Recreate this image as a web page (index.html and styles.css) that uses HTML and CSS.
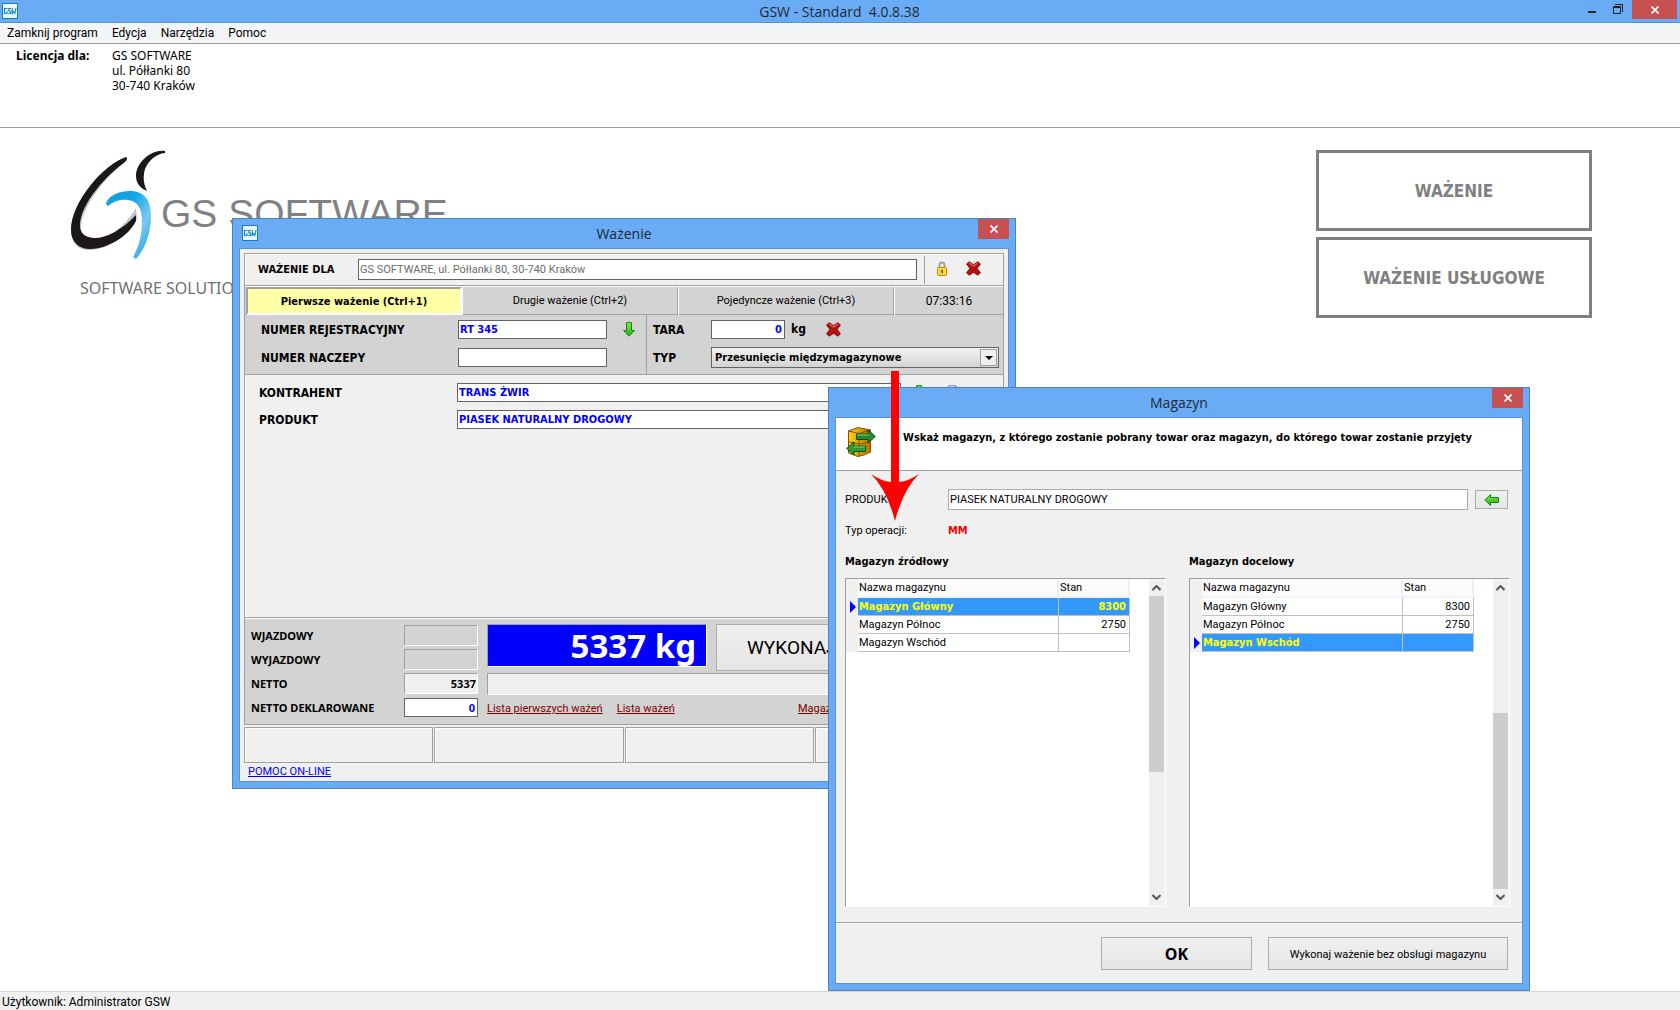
FILE: index.html
```html
<!DOCTYPE html>
<html lang="pl">
<head>
<meta charset="utf-8">
<title>GSW - Standard 4.0.8.38</title>
<link rel="stylesheet" href="styles.css">
</head>
<body>
<svg class="defs" aria-hidden="true">
  <defs>
    <linearGradient id="green" x1="0" y1="0" x2="0" y2="1"><stop offset="0" stop-color="#8be84a"/><stop offset="1" stop-color="#1fae10"/></linearGradient>
    <linearGradient id="blue" x1="0" y1="0" x2="1" y2="1"><stop offset="0" stop-color="#0f9fe0"/><stop offset="0.35" stop-color="#12a4e6"/><stop offset="0.65" stop-color="#7cc8f2"/><stop offset="1" stop-color="#0f9fe0"/></linearGradient>
    <linearGradient id="gold" x1="0" y1="0" x2="1" y2="0"><stop offset="0" stop-color="#ffd80a"/><stop offset="1" stop-color="#b86e00"/></linearGradient>
    <symbol id="i-close" viewBox="0 0 8 8"><path d="M0.5 0.5L7.5 7.5M7.5 0.5L0.5 7.5" stroke="#fff" stroke-width="1.7"/></symbol>
    <symbol id="i-down" viewBox="0 0 12 15"><path d="M3.5 0.6h5v7.9h3L6 14.2 0.6 8.5h2.9z" fill="url(#green)" stroke="#0a8a0a"/></symbol>
    <symbol id="i-left" viewBox="0 0 15 12"><path d="M14.4 3.5v5H6.5v3L0.8 6 6.5 0.6v2.9z" fill="url(#green)" stroke="#0a8a0a"/></symbol>
    <symbol id="i-cross" viewBox="0 0 15 15"><path d="M3.2 0.7L7.5 3.600 11.8 0.7 14.5 3 11.2 7.4 14.5 11.800 11.800 14.2 7.5 11.400 3.200 14.2 0.500 11.800 3.800 7.4 0.500 3z" fill="#b5120f" stroke="#7c0808" stroke-width="0.8"/><path d="M3.2 1.9L7.5 4.900 11.800 1.900" fill="none" stroke="#e06055" stroke-width="1.200"/></symbol>
    <symbol id="i-app" viewBox="0 0 16 16"><rect x="0.5" y="0.5" width="15" height="15" fill="#e9f5fb" stroke="#1580bd"/><path d="M5.5 5.5h-3v5h2.500v-2.500M9 5.500H6.800v2.500H8.700v2.500H6.300M10.300 5v5.500l1.300-2 1.200 2 1.200-5.500" fill="none" stroke="#1487c6" stroke-width="1.100"/></symbol>
  </defs>
</svg>

<header class="titlebar">
  <svg class="app-icon" width="16" height="16"><use href="#i-app"/></svg>
  <h1 class="title">GSW - Standard&nbsp; 4.0.8.38</h1>
  <div class="controls">
    <button class="ctl" aria-label="Minimalizuj"><svg width="8" height="10"><path d="M0 7h8v2H0z" fill="#222"/></svg></button>
    <button class="ctl" aria-label="Przywróć"><svg width="10" height="10"><path d="M2 0.500H9.500V8M0.500 2.500h7v7h-7zM0.500 3.500h7" fill="none" stroke="#222"/></svg></button>
    <button class="close close-main" aria-label="Zamknij"><svg width="8" height="8"><use href="#i-close"/></svg></button>
  </div>
</header>
<nav class="menu">
  <button>Zamknij program</button><button>Edycja</button><button>Narzędzia</button><button>Pomoc</button>
</nav>
<section class="licence">
  <strong>Licencja dla:</strong>
  <p>GS SOFTWARE<br>ul. Półłanki 80<br>30-740 Kraków</p>
</section>

<main class="desktop">
  <div class="brand">
    <svg class="logo" width="400" height="114" viewBox="0 0 400 114">
      <path d="M56 8C36 12 1 52 1 80c0 14 8 21 20 20 16-1 38-15 46-31l-1-11C55 77 35 91 24 91 15 91 11 85 11 77 12 55 38 25 56 11z" fill="#c3c4ca"/>
      <path d="M56 7C34 14 1 52 1 80c0 12 8 19 19 19 17 0 38-12 46-28V65C52 80 36 88 25 88 15 88 10 83 10 76 10 53 38 24 55 12 57 10 58 8 56 7z" fill="#1b171b"/>
      <path d="M95 1C82-1 66 12 66 26c0 7 4 12 11 15-4-8-4-15-2-22C79 10 86 4 95 3z" fill="#1b171b"/>
      <path d="M36 54C38 45 50 41 60 41c14 0 21 9 21 25 0 17-6 33-15 43l-3-2c7-12 9-25 9-36 0-12-4-20-14-21-9-1-15 2-20 6z" fill="url(#blue)"/>
      <text x="91" y="77" class="wordmark">GS SOFTWARE</text>
    </svg>
    <p class="slogan">SOFTWARE SOLUTIONS</p>
  </div>
  <div class="actions">
    <button>WAŻENIE</button>
    <button>WAŻENIE USŁUGOWE</button>
  </div>
</main>

<footer class="status">Użytkownik: Administrator GSW</footer>

<section class="window weighing" aria-label="Ważenie">
  <header class="win-title">
    <svg class="win-icon" width="16" height="16"><use href="#i-app"/></svg>
    <h2 class="title">Ważenie</h2>
    <button class="close" aria-label="Zamknij"><svg width="8" height="8"><use href="#i-close"/></svg></button>
  </header>
  <div class="win-body w-body">
    <div class="panel">
      <div class="owner">
        <label for="owner">WAŻENIE DLA</label>
        <input id="owner" class="field" value="GS SOFTWARE, ul. Półłanki 80, 30-740 Kraków">
        <div class="owner-tools">
          <button class="icon" aria-label="Zablokuj"><svg width="12" height="16" viewBox="0 0 12 16"><path d="M3.500 8V4a2.500 2.500 0 0 1 5 0v4" fill="none" stroke="#a2a29a" stroke-width="2"/><rect x="1.500" y="6.500" width="9" height="8" rx="1" fill="#ffd932" stroke="#bd8a08"/><path d="M6 9v3" stroke="#5c4200" stroke-width="1.500"/></svg></button>
          <button class="icon" aria-label="Wyczyść"><svg width="15" height="15"><use href="#i-cross"/></svg></button>
        </div>
      </div>
      <div class="tabs">
        <button class="tab active">Pierwsze ważenie (Ctrl+1)</button>
        <button class="tab">Drugie ważenie (Ctrl+2)</button>
        <button class="tab">Pojedyncze ważenie (Ctrl+3)</button>
        <span class="tab clock">07:33:16</span>
      </div>
      <div class="vehicle">
        <div class="plates">
          <label for="plate">NUMER REJESTRACYJNY</label>
          <input id="plate" class="field bold" value="RT 345">
          <button class="icon" aria-label="Wybierz pojazd"><svg width="12" height="15"><use href="#i-down"/></svg></button>
          <label for="trailer">NUMER NACZEPY</label>
          <input id="trailer" class="field bold">
        </div>
        <div class="tare">
          <label for="tare">TARA</label>
          <div class="tare-row">
            <input id="tare" class="field bold num" value="0"><span class="unit">kg</span>
            <button class="icon" aria-label="Wyczyść tarę"><svg width="15" height="15"><use href="#i-cross"/></svg></button>
          </div>
          <label for="type">TYP</label>
          <div class="select"><select id="type"><option>Przesunięcie międzymagazynowe</option></select><span class="drop"></span></div>
        </div>
      </div>
      <div class="goods">
        <label for="client">KONTRAHENT</label>
        <input id="client" class="field bold" value="TRANS ŻWIR">
        <div class="goods-tools">
          <button class="icon" aria-label="Wybierz kontrahenta"><svg width="12" height="15"><use href="#i-down"/></svg></button>
          <button class="icon" aria-label="Karta kontrahenta"><svg width="12" height="15"><path d="M0.500 0.500h7l4 4v10h-11zM7.500 0.500v4h4" fill="#d5e1f3" stroke="#8797bd"/></svg></button>
        </div>
        <label for="product">PRODUKT</label>
        <input id="product" class="field bold" value="PIASEK NATURALNY DROGOWY">
      </div>
      <div class="result">
        <div class="weights">
          <label for="win">WJAZDOWY</label><input id="win" class="sunken" readonly>
          <label for="wout">WYJAZDOWY</label><input id="wout" class="sunken" readonly>
          <label for="net">NETTO</label><input id="net" class="sunken light" value="5337" readonly>
          <label for="decl">NETTO DEKLAROWANE</label><input id="decl" class="field bold num" value="0">
        </div>
        <div class="reading">
          <div class="reading-top">
            <output class="display">5337 kg</output>
            <button class="push perform">WYKONAJ</button>
          </div>
          <div class="message"></div>
          <div class="links">
            <div class="lists">
              <a href="#first">Lista pierwszych ważeń</a>
              <a href="#all">Lista ważeń</a>
            </div>
            <a href="#store">Magazyn</a>
          </div>
        </div>
      </div>
    </div>
    <div class="cells"><span></span><span></span><span></span><span></span></div>
    <a class="help" href="#help">POMOC ON-LINE</a>
  </div>
</section>

<section class="window store" aria-label="Magazyn">
  <header class="win-title">
    <h2 class="title">Magazyn</h2>
    <button class="close" aria-label="Zamknij"><svg width="8" height="8"><use href="#i-close"/></svg></button>
  </header>
  <div class="win-body">
    <div class="intro">
      <svg width="30" height="30" viewBox="0 0 30 30">
        <path d="M2.500 4L12 0.600 24.500 3v22L18 28l-6 1.500L2.500 26z" fill="url(#gold)" stroke="#855000"/>
        <path d="M2.500 4L13 6.500 24.500 3M13 6.500V29M3 15l10 2 11-2" fill="none" stroke="#855000"/>
        <path d="M10.500 7H22V2.800L29.300 9.500 22 16v-3.500H10.500z" fill="#238a2b" stroke="#0c4d14"/>
        <path d="M11 8h11.500" stroke="#86d689"/>
        <path d="M19.500 19H8v-4L0.700 21.500 8 28v-3.500h11.500z" fill="#2c9c33" stroke="#0c4d14"/>
        <path d="M8 20h11" stroke="#86d689"/>
      </svg>
      <p>Wskaż magazyn, z którego zostanie pobrany towar oraz magazyn, do którego towar zostanie przyjęty</p>
    </div>
    <div class="form">
      <label for="sproduct">PRODUKT:</label>
      <input id="sproduct" class="field plain" value="PIASEK NATURALNY DROGOWY">
      <button class="push pick" aria-label="Wybierz produkt"><svg width="15" height="12"><use href="#i-left"/></svg></button>
      <span>Typ operacji:</span><strong class="op">MM</strong>
    </div>
    <div class="grids">
      <section>
        <h3>Magazyn źródłowy</h3>
        <div class="grid">
          <table>
            <thead><tr><th class="mark"></th><th class="name">Nazwa magazynu</th><th class="qty">Stan</th></tr></thead>
            <tbody>
              <tr class="sel"><td class="mark"></td><td>Magazyn Główny</td><td>8300</td></tr>
              <tr><td class="mark"></td><td>Magazyn Północ</td><td>2750</td></tr>
              <tr><td class="mark"></td><td>Magazyn Wschód</td><td></td></tr>
            </tbody>
          </table>
          <div class="scroll"><svg width="9" height="6"><path d="M0.500 5l4-4 4 4" fill="none" stroke="#555" stroke-width="2"/></svg><div class="track"><i></i></div><svg width="9" height="6"><path d="M0.500 1l4 4 4-4" fill="none" stroke="#555" stroke-width="2"/></svg></div>
        </div>
      </section>
      <section>
        <h3>Magazyn docelowy</h3>
        <div class="grid">
          <table>
            <thead><tr><th class="mark"></th><th class="name">Nazwa magazynu</th><th class="qty">Stan</th></tr></thead>
            <tbody>
              <tr><td class="mark"></td><td>Magazyn Główny</td><td>8300</td></tr>
              <tr><td class="mark"></td><td>Magazyn Północ</td><td>2750</td></tr>
              <tr class="sel"><td class="mark"></td><td>Magazyn Wschód</td><td></td></tr>
            </tbody>
          </table>
          <div class="scroll"><svg width="9" height="6"><path d="M0.500 5l4-4 4 4" fill="none" stroke="#555" stroke-width="2"/></svg><div class="track end"><i></i></div><svg width="9" height="6"><path d="M0.500 1l4 4 4-4" fill="none" stroke="#555" stroke-width="2"/></svg></div>
        </div>
      </section>
    </div>
    <div class="buttons">
      <button class="push ok">OK</button>
      <button class="push skip">Wykonaj ważenie bez obsługi magazynu</button>
    </div>
  </div>
</section>

<svg class="pointer" width="48" height="150" viewBox="0 0 48 150" aria-hidden="true"><path d="M20 0h8v111q10-1 20-8-16 16-24 47Q16 119 0 103q10 7 20 8z" fill="#f00"/></svg>
</body>
</html>
```
FILE: styles.css
```css
* { box-sizing: border-box; }
body {
  margin: 0;
  min-height: 100vh;
  display: flex;
  flex-direction: column;
  position: relative;
  background: #fff;
  color: #000;
  font: 11px/15px "DejaVu Sans Condensed", "Noto Sans", sans-serif;
}
button, input, select { font: inherit; color: inherit; margin: 0; padding: 0; border-radius: 0; }
button { border: 0; background: none; }
h1, h2, h3, p { margin: 0; }
svg { display: block; flex: none; }
.defs { position: absolute; width: 0; height: 0; }

/* main window chrome */
.titlebar {
  display: flex;
  height: 23px;
  padding: 0 3px 0 2px;
  background: #6aabf6;
  border-bottom: 1px solid #5591d3;
}
.titlebar .app-icon { margin: 3px 81px 0 0; }
.title { flex: 1; text-align: center; font: 14px/23px "Open Sans", sans-serif; color: #1e2a38; }
.controls { display: flex; }
.ctl { display: flex; padding: 4px 8px 0; }
.controls .ctl + .ctl { padding: 4px 9px 0; }
.close { display: flex; align-items: center; justify-content: center; width: 31px; height: 20px; background: #c75050; }
.close-main { width: 45px; height: 19px; }
.menu { display: flex; gap: 14px; height: 21px; padding: 0 7px; background: #f4f5f7; border-bottom: 1px solid #a0a0a0; font: 12px/20px Roboto, sans-serif; }
.licence { display: flex; height: 84px; padding: 4px 16px; border-bottom: 1px solid #a0a0a0; font: 12px/15px "Noto Sans", sans-serif; }
.licence strong { width: 96px; }
.desktop { flex: 1; display: flex; justify-content: space-between; padding: 22px 88px 0 70px; }
.wordmark { font: 39px "Liberation Sans", sans-serif; fill: #808188; }
.slogan { margin: 12px 0 0 10px; font: 16px/24px "Noto Sans", sans-serif; color: #6f7074; }
.actions { display: flex; flex-direction: column; gap: 6px; width: 276px; }
.actions button { height: 81px; padding-top: 2px; border: 3px solid #808080; color: #808080; font-size: 17px; font-weight: bold; }
.status { height: 19px; padding: 0 2px; background: #f0f0f0; border-top: 1px solid #d7d7d7; font: 12px/20px Roboto, sans-serif; }

/* floating windows */
.window { position: absolute; display: flex; flex-direction: column; padding: 0 6px 6px; background: #6aabf6; border: 1px solid #4c82bd; }
.weighing { left: 232px; top: 218px; width: 784px; height: 571px; }
.store { left: 828px; top: 387px; width: 702px; height: 604px; }
.win-title { display: flex; height: 29px; }
.win-title .title { line-height: 30px; }
.weighing .title { padding-left: 12px; }
.store .title { padding-left: 31px; }
.win-icon { margin: 6px 0 0 3px; }
.win-body { flex: 1; display: flex; flex-direction: column; border: 1px solid #5a94d8; background: #f0f0f0; }
.w-body { padding: 4px 4px 0; }

.field { height: 19px; padding: 0 1px; background: #fff; border: 1px solid #646464; color: #00f; }
.bold, label { font-weight: bold; }
.num { text-align: right; padding-right: 2px; }
.icon { display: flex; align-items: center; justify-content: center; }

.panel { display: flex; flex-direction: column; height: 472px; border: 1px solid #a0a0a0; box-shadow: inset 1px 1px #fff; }
.owner { display: flex; align-items: center; height: 32px; padding-left: 13px; border-bottom: 1px solid #a0a0a0; }
.owner label { width: 100px; }
.owner .field { width: 559px; height: 21px; color: #6d6d6d; font-family: Roboto, sans-serif; }
.owner-tools { display: flex; gap: 18px; align-self: stretch; margin: 2px 0 1px 7px; padding: 0 11px 3px; border-left: 1px solid #a0a0a0; }
.tabs { display: grid; grid-template-columns: 217px 216px 216px 1fr; height: 29px; background: #d3d3d3; border-top: 1px solid #fff; border-bottom: 1px solid #a0a0a0; }
.tab { border-right: 1px solid #a0a0a0; border-left: 1px solid #fff; text-align: center; line-height: 28px; font-family: Roboto, sans-serif; }
.tab.active { margin-left: 1px; padding-top: 2px; background: #ffffa6; border: 2px solid; border-color: #a0a0a0 #fff #fff #a0a0a0; line-height: 20px; font-family: inherit; font-weight: bold; }
.clock { border-right: 0; font-size: 12px; }
.vehicle { display: flex; height: 60px; background: #d3d3d3; border-bottom: 1px solid #a0a0a0; font-size: 12px; }
.plates { display: grid; grid-template-columns: 197px 149px 44px; grid-template-rows: 19px 19px; row-gap: 9px; width: 402px; padding: 5px 0 0 16px; align-items: center; border-right: 1px solid #a0a0a0; }
.vehicle .field, .goods .field, .select { font-size: 11px; }
.vehicle label, .goods label { padding-top: 2px; }
.tare { flex: 1; display: grid; grid-template-columns: 58px 1fr; grid-template-rows: 19px 21px; row-gap: 8px; align-items: center; padding: 5px 4px 0 6px; }
.tare-row { display: flex; align-items: center; font-weight: bold; }
.tare-row .field { width: 74px; }
.unit { width: 41px; padding-left: 6px; }
.select { position: relative; height: 21px; }
.select select { appearance: none; width: 100%; height: 21px; padding: 0 3px; border: 1px solid #646464; background: linear-gradient(#f2f2f2, #d4d4d4); font-weight: bold; }
.drop { position: absolute; right: 2px; top: 2px; width: 17px; height: 17px; border: 1px solid #a0a0a0; background: #f0f0f0; pointer-events: none; }
.drop::after { content: ""; position: absolute; left: 4px; top: 6px; border: 4px solid transparent; border-top-color: #000; border-bottom: 0; }
.goods { flex: 1; display: grid; grid-template-columns: 198px 444px 1fr; grid-template-rows: 19px 19px; row-gap: 8px; align-items: center; padding: 8px 0 0 14px; font-size: 12px; }
.goods-tools { display: flex; gap: 23px; padding-left: 12px; }
.result { display: flex; height: 107px; padding-top: 6px; background: #d3d3d3; border-top: 1px solid #a0a0a0; box-shadow: inset 0 1px #fff; }
.weights { display: grid; grid-template-columns: 153px 74px; grid-auto-rows: 21px; row-gap: 3px; width: 242px; padding: 1px 0 0 6px; align-content: start; align-items: center; font-family: "Noto Sans", sans-serif; }
.sunken { height: 21px; padding: 0 1px; background: #d3d3d3; border: 1px solid; border-color: #a0a0a0 #fff #fff #a0a0a0; text-align: right; font-weight: bold; }
.light { background: #f0f0f0; }
.reading { flex: 1; display: flex; flex-direction: column; }
.reading-top { display: flex; gap: 9px; height: 49px; }
.display { width: 220px; height: 43px; padding-right: 10px; background: #00f; border: 1px solid; border-color: #a0a0a0 #fff #fff #a0a0a0; color: #fff; text-align: right; font: bold 33px/42px "Noto Sans", sans-serif; }
.push { border: 1px solid #acacac; background: linear-gradient(#f0f0f0, #e5e5e5); }
.perform { width: 280px; height: 47px; padding-left: 30px; text-align: left; font: 19px Roboto, sans-serif; }
.message { height: 22px; background: #f0f0f0; border: 1px solid; border-color: #a0a0a0 #fff #fff #a0a0a0; }
.links { display: flex; padding-top: 6px; font-family: Roboto, sans-serif; }
.links a { color: #800000; }
.lists { display: flex; gap: 14px; width: 311px; }
.cells { display: grid; grid-template-columns: repeat(4, 1fr); gap: 1px; height: 36px; margin-top: 2px; }
.cells span { border: 1px solid #a0a0a0; box-shadow: inset 1px 1px #fff; }
.help { padding: 1px 4px; color: #00f; font-family: Roboto, sans-serif; }

/* warehouse dialog */
.intro { display: flex; gap: 27px; height: 53px; padding: 9px 10px; background: #fff; border-bottom: 1px solid #a0a0a0; font-weight: bold; }
.intro p { padding-top: 3px; }
.form { display: grid; grid-template-columns: 103px 1fr 33px; grid-template-rows: 21px 21px; row-gap: 10px; align-items: center; padding: 18px 14px 0 9px; font-family: Roboto, sans-serif; }
.form label { font-weight: normal; }
.plain { height: 21px; border-color: #acacac; color: #000; margin-right: 7px; }
.pick { display: flex; align-items: center; justify-content: center; height: 19px; }
.op { color: #f00; font-family: "DejaVu Sans Condensed", sans-serif; }
.grids { flex: 1; display: grid; grid-template-columns: 1fr 1fr; gap: 23px; padding: 13px 12px 15px 9px; }
.grids section { display: flex; flex-direction: column; gap: 9px; }
h3 { font-size: 11px; }
.grid { flex: 1; display: flex; justify-content: space-between; align-items: flex-start; border: 1px solid; border-color: #a0a0a0 #fff #fff #a0a0a0; background: #fff; }
table { border-collapse: separate; border-spacing: 0; table-layout: fixed; width: 284px; font-family: Roboto, sans-serif; }
th { height: 19px; padding: 1px 1px 0; text-align: left; font-weight: normal; background: #fcfcfc; border-right: 2px solid #e8f0f9; border-bottom: 2px solid #f0f3f8; line-height: 16px; }
td { height: 18px; padding: 1px 3px 0 1px; border-right: 1px solid #c0c0c0; border-bottom: 1px solid #c0c0c0; line-height: 16px; }
td:last-child { text-align: right; }
.mark { width: 12px; padding: 0; background: #f0f0f0; border: 0; }
.name { width: 201px; }
.sel td { background: #3399ff; color: #ff0; font: bold 11px/16px "DejaVu Sans Condensed", sans-serif; }
.sel td.mark { background: #f0f0f0; }
.sel .mark::after { content: ""; display: block; width: 6px; margin-left: 4px; border: 6px solid transparent; border-left-color: #00f; border-right: 0; }
.scroll { align-self: stretch; display: flex; flex-direction: column; align-items: center; width: 16px; padding: 6px 1px 6px 0; background: #f0f0f0; }
.track { flex: 1; width: 100%; margin: 5px 0; display: flex; flex-direction: column; }
.track.end { justify-content: flex-end; }
.track i { height: 60%; background: #cdcdcd; }
.buttons { display: flex; justify-content: flex-end; gap: 16px; height: 61px; padding: 14px 14px 0; border-top: 1px solid #a0a0a0; box-shadow: inset 0 1px #fff; }
.buttons .push { height: 33px; padding-top: 1px; }
.ok { width: 151px; font: bold 16px "Noto Sans", sans-serif; }
.skip { width: 240px; font-family: Roboto, sans-serif; }

.pointer { position: absolute; left: 871px; top: 371px; }
```
